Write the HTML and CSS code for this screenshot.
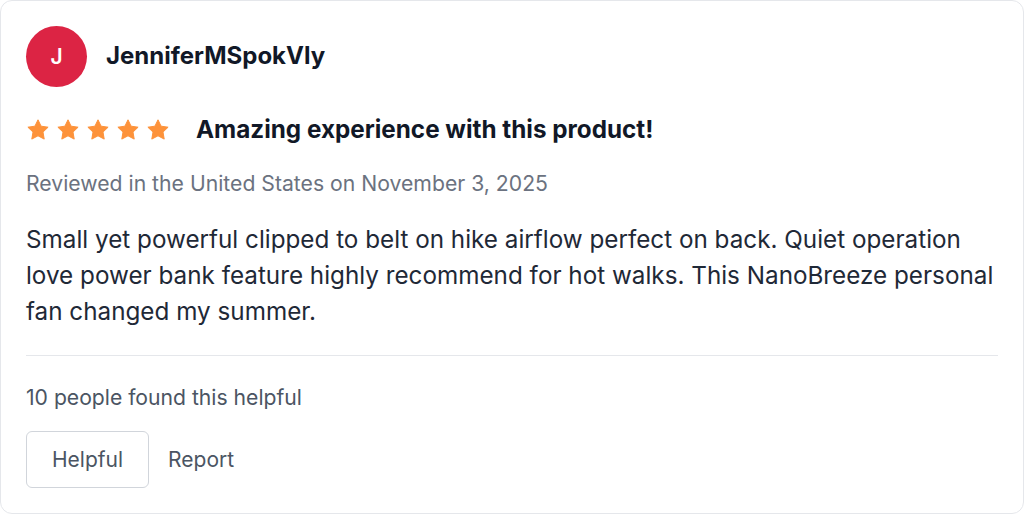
FILE: index.html
```html
<!DOCTYPE html>
<html>
<head>
<meta charset="utf-8">
<link rel="stylesheet" href="styles.css">
</head>
<body>
<div class="card">
  <div class="author">
    <div class="avatar">J</div>
    <div class="name">JenniferMSpokVly</div>
  </div>
  <div class="rating-row">
    <div class="stars">
      <svg class="star" viewBox="0 0 24 24"><path d="M12 1.8l3.1 6.4 7 1-5.1 4.9 1.2 7-6.2-3.3-6.2 3.3 1.2-7L1.9 9.2l7-1z"/></svg>
      <svg class="star" viewBox="0 0 24 24"><path d="M12 1.8l3.1 6.4 7 1-5.1 4.9 1.2 7-6.2-3.3-6.2 3.3 1.2-7L1.9 9.2l7-1z"/></svg>
      <svg class="star" viewBox="0 0 24 24"><path d="M12 1.8l3.1 6.4 7 1-5.1 4.9 1.2 7-6.2-3.3-6.2 3.3 1.2-7L1.9 9.2l7-1z"/></svg>
      <svg class="star" viewBox="0 0 24 24"><path d="M12 1.8l3.1 6.4 7 1-5.1 4.9 1.2 7-6.2-3.3-6.2 3.3 1.2-7L1.9 9.2l7-1z"/></svg>
      <svg class="star" viewBox="0 0 24 24"><path d="M12 1.8l3.1 6.4 7 1-5.1 4.9 1.2 7-6.2-3.3-6.2 3.3 1.2-7L1.9 9.2l7-1z"/></svg>
    </div>
    <div class="title">Amazing experience with this product!</div>
  </div>
  <div class="meta">Reviewed in the United States on November 3, 2025</div>
  <p class="body">Small yet powerful clipped to belt on hike airflow perfect on back. Quiet operation love power bank feature highly recommend for hot walks. This NanoBreeze personal fan changed my summer.</p>
  <div class="divider"></div>
  <div class="helpful-count">10 people found this helpful</div>
  <div class="actions">
    <button class="btn">Helpful</button>
    <button class="link">Report</button>
  </div>
</div>
</body>
</html>
```

FILE: styles.css
```css
* { box-sizing: border-box; }
html, body { margin: 0; padding: 0; background: #ffffff; }
body {
  font-family: Inter, "Noto Sans", sans-serif;
  color: #111827;
}
.card {
  width: 1024px;
  height: 514px;
  border: 1px solid #e5e7eb;
  border-radius: 12px;
  padding: 25px 25px 0 25px;
  background: #fff;
}
.author {
  display: flex;
  align-items: center;
  gap: 19px;
}
.avatar {
  width: 61px;
  height: 61px;
  border-radius: 50%;
  background: #dc2444;
  color: #fff;
  font-weight: 600;
  font-size: 21px;
  display: flex;
  align-items: center;
  justify-content: center;
}
.name {
  font-size: 24px;
  line-height: 28px;
  font-weight: 700;
  color: #111827;
  margin-bottom: 2px;
}
.rating-row {
  display: flex;
  align-items: center;
  gap: 26px;
  margin-top: 28px;
}
.stars {
  display: flex;
  gap: 6px;
}
.star {
  width: 24px;
  height: 24px;
  fill: #fd923a;
  stroke: #fd923a;
  stroke-width: 1;
  stroke-linejoin: round;
  display: block;
}
.title {
  font-size: 24.25px;
  font-weight: 700;
  color: #111827;
}
.meta {
  margin-top: 26px;
  font-size: 21.2px;
  color: #6b7280;
}
.body {
  margin: 26px 0 0 0;
  font-size: 24.25px;
  line-height: 36px;
  color: #1f2937;
}
.divider {
  margin-top: 25px;
  height: 1px;
  background: #e5e7eb;
}
.helpful-count {
  margin-top: 29px;
  font-size: 21.15px;
  color: #4b5563;
}
.actions {
  display: flex;
  align-items: center;
  margin-top: 21px;
}
.btn {
  font-family: inherit;
  font-size: 21px;
  color: #4b5563;
  background: #fff;
  border: 1px solid #d1d5db;
  border-radius: 6px;
  height: 57px;
  padding: 0 25px;
}
.link {
  font-family: inherit;
  font-size: 21px;
  color: #4b5563;
  background: none;
  border: none;
  padding: 0 19px;
}
```
